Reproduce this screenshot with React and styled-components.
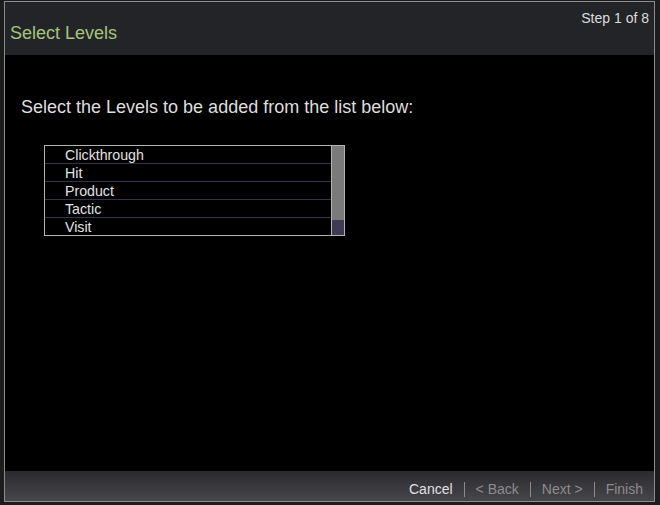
import React from "react";
import styled, { createGlobalStyle } from "styled-components";

const GlobalStyle = createGlobalStyle`
  html, body {
    margin: 0;
    padding: 0;
    background: #1c1c1c;
  }
  body {
    font-family: "Liberation Sans", Arial, sans-serif;
  }
`;

const levels = ["Clickthrough", "Hit", "Product", "Tactic", "Visit"];

const Wizard = () => {
  return (
    <>
      <GlobalStyle />
      <Window>
        <Header>
          <Title>Select Levels</Title>
          <Step>Step 1 of 8</Step>
        </Header>
        <Body>
          <Prompt>Select the Levels to be added from the list below:</Prompt>
          <ListBox>
            <Rows>
              {levels.map((name) => (
                <Row key={name}>{name}</Row>
              ))}
            </Rows>
            <Scrollbar>
              <Thumb />
            </Scrollbar>
          </ListBox>
        </Body>
        <Footer>
          <Action $active>Cancel</Action>
          <Divider />
          <Action>&lt; Back</Action>
          <Divider />
          <Action>Next &gt;</Action>
          <Divider />
          <Action>Finish</Action>
        </Footer>
      </Window>
    </>
  );
};

export default Wizard;

const Window = styled.div`
  margin: 1px 0 0 4px;
  width: 649px;
  height: 499px;
  border: 1px solid #8c8c8c;
  display: flex;
  flex-direction: column;
  background: #000000;
`;

const Header = styled.div`
  position: relative;
  height: 53px;
  background: #232428;
  display: flex;
  align-items: flex-end;
  padding: 0 5px 11px 5px;
  box-sizing: border-box;
`;

const Title = styled.div`
  font-size: 18px;
  color: #a5c57c;
`;

const Step = styled.div`
  position: absolute;
  top: 8px;
  right: 5px;
  font-size: 14px;
  color: #dcdcdc;
`;

const Body = styled.div`
  flex: 1;
  padding: 42px 0 0 16px;
`;

const Prompt = styled.div`
  font-size: 18px;
  color: #dedede;
  margin-bottom: 27px;
`;

const ListBox = styled.div`
  margin-left: 23px;
  width: 299px;
  height: 89px;
  border: 1px solid #b4b4b4;
  display: flex;
`;

const Rows = styled.div`
  flex: 1;
  display: flex;
  flex-direction: column;
`;

const Row = styled.div`
  height: 17px;
  line-height: 18px;
  padding-left: 20px;
  font-size: 14.2px;
  color: #e2e2e2;
  border-bottom: 1px solid #34344a;
  overflow: hidden;

  &:last-child {
    border-bottom: none;
  }
`;

const Scrollbar = styled.div`
  width: 12px;
  border-left: 1px solid #b4b4b4;
  background: #3e3c54;
`;

const Thumb = styled.div`
  height: 74px;
  background: #7a7a7a;
`;

const Footer = styled.div`
  height: 30px;
  box-sizing: border-box;
  padding: 6px 11px 0 0;
  background: linear-gradient(#2b2b2f, #47464b);
  display: flex;
  align-items: center;
  justify-content: flex-end;
  gap: 11px;
`;

const Action = styled.div`
  font-size: 14px;
  color: ${(p) => (p.$active ? "#e0e0e0" : "#8c8c8c")};
`;

const Divider = styled.div`
  width: 1px;
  height: 15px;
  background: #8a8a8a;
`;
